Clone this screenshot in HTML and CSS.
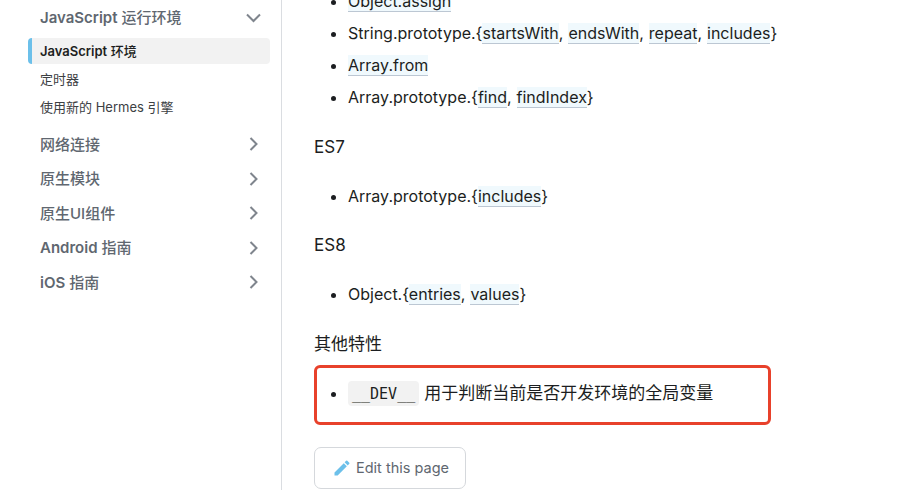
FILE: index.html
```html
<!DOCTYPE html>
<html lang="zh">
<head>
  <meta charset="UTF-8">
  <title>JavaScript 环境</title>
  <link rel="stylesheet" href="styles.css">
</head>
<body>
  <div class="pagina">
    <aside class="lateral">
      <div class="categoria abierta">
        <span><b>JavaScript</b> 运行环境</span>
        <svg class="flecha" width="16" height="16" viewBox="0 0 16 16"><path d="M1 5.5 7.5 12 14 5.5" /></svg>
      </div>
      <a class="enlace activo"><b>JavaScript</b> 环境</a>
      <a class="enlace">定时器</a>
      <a class="enlace">使用新的 Hermes 引擎</a>
      <div class="categoria separada">
        <span>网络连接</span>
        <svg class="flecha" width="16" height="16" viewBox="0 0 16 16"><path d="M4.5 3 10.5 9 4.5 15" /></svg>
      </div>
      <div class="categoria">
        <span>原生模块</span>
        <svg class="flecha" width="16" height="16" viewBox="0 0 16 16"><path d="M4.5 3 10.5 9 4.5 15" /></svg>
      </div>
      <div class="categoria">
        <span>原生UI组件</span>
        <svg class="flecha" width="16" height="16" viewBox="0 0 16 16"><path d="M4.5 3 10.5 9 4.5 15" /></svg>
      </div>
      <div class="categoria">
        <span><b>Android</b> 指南</span>
        <svg class="flecha" width="16" height="16" viewBox="0 0 16 16"><path d="M4.5 3 10.5 9 4.5 15" /></svg>
      </div>
      <div class="categoria">
        <span><b>iOS</b> 指南</span>
        <svg class="flecha" width="16" height="16" viewBox="0 0 16 16"><path d="M4.5 3 10.5 9 4.5 15" /></svg>
      </div>
    </aside>

    <main class="contenido">
      <ul>
        <li><a>Object.assign</a></li>
        <li>String.prototype.{<a>startsWith</a>, <a>endsWith</a>, <a>repeat</a>, <a>includes</a>}</li>
        <li><a>Array.from</a></li>
        <li>Array.prototype.{<a>find</a>, <a>findIndex</a>}</li>
      </ul>
      <p class="primero">ES7</p>
      <ul>
        <li>Array.prototype.{<a>includes</a>}</li>
      </ul>
      <p>ES8</p>
      <ul>
        <li>Object.{<a>entries</a>, <a>values</a>}</li>
      </ul>
      <p class="antes-caja">其他特性</p>
      <div class="resaltado">
        <ul>
          <li><code>__DEV__</code> <span class="cjk">用于判断当前是否开发环境的全局变量</span></li>
        </ul>
      </div>
      <a class="editar">
        <svg width="20" height="20" viewBox="0 0 40 40"><path d="M34.5 11.7l-3 3.1-6.3-6.3 3.1-3q.5-.5 1.2-.5t1.1.5l3.9 3.9q.5.4.5 1.1t-.5 1.2zM5 28.8 23.5 10.3l6.2 6.3L11.3 35H5V28.8z" /></svg>
        Edit this page
      </a>
    </main>
  </div>
</body>
</html>
```

FILE: styles.css
```css
html, body {
  margin: 0;
  height: 490px;
  overflow: hidden;
  background-color: #fff;
}

body {
  color: #1c1e21;
  font-family: Inter, "Noto Sans CJK SC", sans-serif;
}

.pagina {
  display: flex;
  height: 490px;
  overflow: hidden;
}

/* barra lateral */
.lateral {
  box-sizing: border-box;
  width: 282px;
  height: 490px;
  flex-shrink: 0;
  padding: 0 11px 0 28px;
  border-right: 1px solid #dadde1;
}

.categoria {
  display: flex;
  justify-content: space-between;
  align-items: center;
  height: 34.5px;
  padding-left: 12px;
  padding-right: 8px;
  color: #606770;
  font-size: 15px;
  font-weight: 500;
}

.categoria b, .activo b {
  font-weight: 600;
}

.abierta {
  height: 33px;
}

.separada {
  margin-top: 6px;
}

.flecha {
  fill: none;
  stroke: #7f858d;
  stroke-width: 2;
}

.enlace {
  display: block;
  height: 26px;
  margin-top: 2px;
  padding-left: 12px;
  color: #3c4043;
  font-size: 13px;
  line-height: 26px;
}

.activo {
  box-sizing: border-box;
  margin-top: 5px;
  padding-left: 8px;
  border-left: 4px solid #6cc0ea;
  border-radius: 4px;
  background-color: #f2f2f2;
  color: #1c1e21;
  font-weight: 500;
}

/* contenido */
.contenido {
  flex: 1;
  margin-top: -13px;
  padding-left: 32px;
  font-size: 17px;
  line-height: 28px;
}

.contenido ul {
  margin: 0;
  padding-left: 34px;
  font-size: 16px;
  word-spacing: 0.5px;
}

.contenido li {
  margin-bottom: 4px;
}

.contenido p {
  margin: 21px 0;
}

.contenido .primero {
  margin-top: 21.5px;
}

.contenido .antes-caja {
  margin-top: 22px;
  margin-bottom: 7px;
}

.contenido li a {
  background-color: #f0f9fd;
  border-bottom: 1px solid #bcc7d3;
}

code {
  padding: 4px 4px 3px;
  border-radius: 4px;
  background-color: #f2f2f2;
  font-family: "DejaVu Sans Mono", monospace;
  font-size: 15px;
}

.cjk {
  font-size: 17px;
}

.resaltado {
  box-sizing: border-box;
  width: 457px;
  height: 60px;
  padding-top: 11px;
  border: 3px solid #e8412b;
  border-radius: 6px;
}

.resaltado ul {
  padding-left: 31px;
}

.editar {
  display: inline-flex;
  align-items: center;
  gap: 4px;
  box-sizing: border-box;
  height: 42px;
  margin-top: 22px;
  padding: 0 16px 0 17px;
  border: 1px solid #d5d8dc;
  border-radius: 7px;
  color: #606770;
  font-size: 14.5px;
}

.editar svg {
  fill: #6cc0ea;
}
```
